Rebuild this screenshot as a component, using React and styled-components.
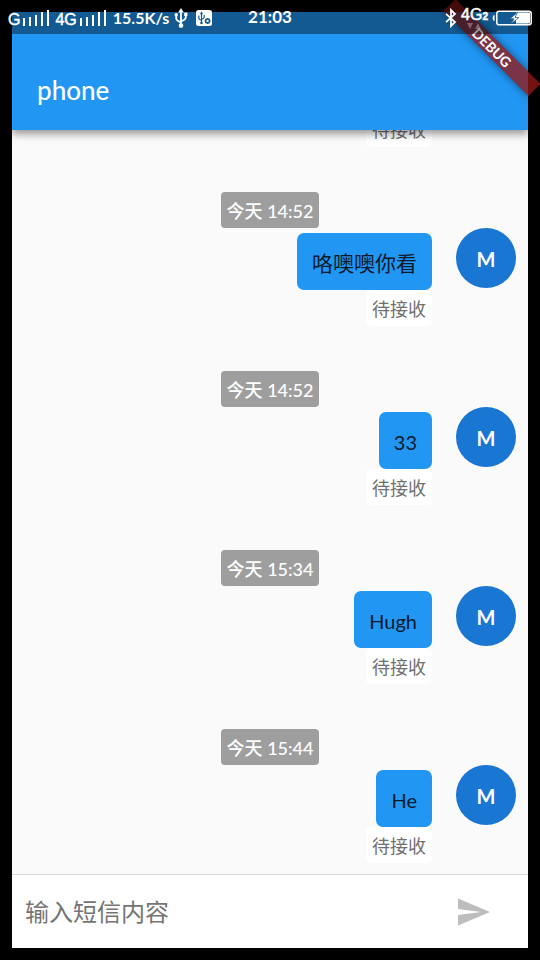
import React from "react";
import styled, { createGlobalStyle } from "styled-components";

const GlobalStyle = createGlobalStyle`
  *, *::before, *::after { box-sizing: border-box; }
  body {
    margin: 0;
    background: #000;
    font-family: Lato, "Noto Sans CJK SC", sans-serif;
  }
`;

const Device = styled.div`
  position: relative;
  display: flex;
  flex-direction: column;
  height: 100vh;
  padding: 12px;
  background: #000;
  overflow: hidden;
`;

const AppPanel = styled.main`
  flex: 1;
  min-height: 0;
  display: flex;
  flex-direction: column;
  background: #fafafa;
  overflow: hidden;
`;

const AppHeader = styled.header`
  position: relative;
  z-index: 1;
  flex: none;
  padding: 62px 25px 24px;
  background: #2196f3;
  box-shadow: 0 4px 8px rgba(0, 0, 0, 0.4);
`;

const Title = styled.h1`
  margin: 0;
  color: #fff;
  font-size: 26px;
  line-height: 32px;
  font-weight: 500;
`;

const StatusBar = styled.div`
  position: absolute;
  inset: 0 0 auto;
  z-index: 3;
  display: grid;
  grid-template-columns: 1fr auto 1fr;
  height: 34px;
  padding: 6px 8px;
  background: rgba(0, 0, 0, 0.4);
  color: #fff;
`;

const StatusGroup = styled.div`
  display: flex;
  align-items: center;
  justify-content: ${(p) => p.$align || "flex-start"};
  gap: ${(p) => p.$gap || 2}px;
`;

const Spacer = styled.span`
  width: ${(p) => p.$w}px;
`;

const StatusText = styled.span`
  font-size: ${(p) => p.$size || 16}px;
  line-height: 22px;
  font-weight: ${(p) => p.$weight || 400};
  white-space: nowrap;
`;

const Network = styled(StatusText)`
  font-family: "Liberation Sans", sans-serif;
  padding-top: ${(p) => (p.$raised ? 0 : 4)}px;
  padding-bottom: ${(p) => (p.$raised ? 4 : 0)}px;
  line-height: 18px;
  -webkit-text-stroke: 0.5px #fff;
  small { font-size: 10px; font-weight: 700; }
`;

const Icon = styled.svg`
  display: block;
  flex: none;
`;

const Ribbon = styled.div`
  position: absolute;
  top: 39px;
  right: -12px;
  z-index: 2;
  width: 120px;
  height: 17px;
  transform: rotate(45deg);
  background: linear-gradient(rgba(183, 28, 28, 0.63), rgba(183, 28, 28, 0.63)), rgba(0, 0, 0, 0.4);
  box-shadow: 0 0 8px rgba(0, 0, 0, 0.5);
  color: #fff;
  text-align: center;
  font-size: 14px;
  line-height: 17px;
  font-weight: 700;
`;

const MessageList = styled.ul`
  flex: 1;
  min-height: 0;
  margin: 0;
  padding: 0 12px 11px;
  list-style: none;
  display: flex;
  flex-direction: column;
  justify-content: flex-end;
  gap: 45px;
  overflow: hidden;
`;

const Message = styled.li`
  flex: none;
  display: flex;
  flex-direction: column;
`;

const TimeBadge = styled.time`
  align-self: center;
  height: 36px;
  padding: 2px 6px 0;
  border-radius: 4px;
  background: #9e9e9e;
  color: #fff;
  font-size: 18px;
  line-height: 34px;
  font-weight: 500;
  white-space: nowrap;
`;

const MessageRow = styled.div`
  display: flex;
  justify-content: flex-end;
  align-items: flex-start;
  gap: 24px;
`;

const Stack = styled.div`
  display: flex;
  flex-direction: column;
  align-items: flex-end;
  padding-top: ${(p) => (p.$flush ? 0 : 5)}px;
`;

const Bubble = styled.p`
  margin: 0;
  padding: 16px 15px 13px;
  border-radius: 7px;
  background: #2196f3;
  color: #0a1a2c;
  font-size: 20px;
  line-height: 28px;
  &:lang(zh) { font-size: 21px; }
`;

const Delivery = styled.span`
  height: 36px;
  padding: 2px 6px 0;
  border-radius: 5px;
  background: #fff;
  color: #707070;
  font-size: 18px;
  line-height: 34px;
`;

const Avatar = styled.div`
  flex: none;
  width: 60px;
  height: 60px;
  padding-top: 1px;
  border-radius: 50%;
  background: #1976d2;
  color: #fff;
  font-size: 20px;
  line-height: 60px;
  font-weight: 700;
  text-align: center;
`;

const AvatarSpace = styled.div`
  flex: none;
  width: 60px;
`;

const Composer = styled.form`
  flex: none;
  display: flex;
  align-items: center;
  height: 74px;
  padding: 0 12px 0 13px;
  border-top: 1px solid #d8d8d8;
  background: #fff;
`;

const MessageInput = styled.input`
  flex: 1;
  min-width: 0;
  height: 48px;
  padding: 0;
  border: 0;
  outline: 0;
  background: transparent;
  color: #212121;
  font: 24px/36px Lato, "Noto Sans CJK SC", sans-serif;
  &::placeholder { color: #757575; opacity: 1; }
`;

const SendButton = styled.button`
  flex: none;
  display: grid;
  place-items: center;
  width: 84px;
  height: 60px;
  padding: 0;
  border: 0;
  background: transparent;
  color: #bdbdbd;
`;

function Signal() {
  return (
    <Icon width="28" height="18" viewBox="0 0 28 18" fill="#fff" aria-hidden="true">
      <rect x="1" y="9" width="2" height="8" />
      <rect x="7" y="8" width="2" height="9" />
      <rect x="13" y="6" width="2" height="11" />
      <rect x="19" y="3" width="2" height="14" />
      <rect x="25" y="1" width="2" height="16" />
    </Icon>
  );
}

function Usb() {
  return (
    <Icon width="14" height="20" viewBox="0 0 14 20" fill="none" stroke="#fff" strokeWidth="1.8" aria-hidden="true">
      <path d="M7 3v14M2.2 7v3.2c0 1.8 1 2.8 4.8 4M11.8 6v3.2c0 1.8-1 2.8-4.8 4" />
      <path d="M7 0l2.8 4.5H4.2z" fill="#fff" stroke="none" />
      <circle cx="7" cy="17.6" r="2.3" fill="#fff" stroke="none" />
      <circle cx="2.2" cy="6.8" r="1.7" fill="#fff" stroke="none" />
      <rect x="10.2" y="4.6" width="3.2" height="3.4" fill="#fff" stroke="none" />
    </Icon>
  );
}

function UsbDebug() {
  return (
    <Icon width="16" height="16" viewBox="0 0 16 16" fill="none" stroke="#145a92" strokeWidth="1.2" aria-hidden="true">
      <rect width="16" height="16" rx="2.5" fill="#fff" stroke="none" />
      <path d="M5.5 2.5v11M2.8 5.5v2.8c0 1.2 1 1.6 2.7 2.2M8.2 5v2.3c0 1.2-1 1.6-2.7 2.2" />
      <path d="M5.5 1.6l1.6 2.6H3.9z" fill="#145a92" stroke="none" />
      <circle cx="5.5" cy="13" r="1.3" fill="#145a92" stroke="none" />
      <circle cx="11.6" cy="11" r="1.9" strokeWidth="1.5" />
      <path d="M11.6 8v1M11.6 13v1M8.6 11h1M13.6 11h1M9.6 9l.6.6M13 12.4l.6.6M13.6 9l-.6.6M10.2 12.4l-.6.6" />
    </Icon>
  );
}

function Bluetooth() {
  return (
    <Icon width="12" height="20" viewBox="0 0 12 20" fill="none" stroke="#fff" strokeWidth="1.8" aria-hidden="true">
      <path d="M1 5.8l9 8.2-4 4V2l4 4-9 8.2" />
    </Icon>
  );
}

function Traffic() {
  return (
    <Icon width="14" height="6" viewBox="0 0 14 6" fill="#fff" fillOpacity="0.3" aria-hidden="true">
      <path d="M0 0h6L3 6zM8 6h6l-3-6z" />
    </Icon>
  );
}

function Battery() {
  return (
    <Icon width="40" height="16" viewBox="0 0 40 16" aria-hidden="true">
      <path d="M2 5.5Q0 8 2 10.5z" fill="#fff" stroke="#fff" />
      <rect x="4.8" y="1.2" width="34.4" height="13.6" rx="2.4" fill="none" stroke="#fff" strokeWidth="1.5" />
      <path d="M24 2.5h14v11H24z" fill="#fff" />
      <path d="M25.5 2.5L18 8.8h4l-3 5 8-6.3h-4z" fill="#fff" stroke="#145a92" strokeWidth="0.7" />
    </Icon>
  );
}

const CellLabel = styled.div`
  position: relative;
  display: flex;
`;

const TrafficMark = styled.span`
  position: absolute;
  left: 6px;
  bottom: 1px;
`;

const messages = [
  { id: 1, partial: true },
  { id: 2, time: "14:52", text: "咯噢噢你看", lang: "zh" },
  { id: 3, time: "14:52", text: "33", lang: "en" },
  { id: 4, time: "15:34", text: "Hugh", lang: "en" },
  { id: 5, time: "15:44", text: "He", lang: "en" },
];

function MessageItem({ message }) {
  if (message.partial) {
    return (
      <Message>
        <MessageRow>
          <Stack $flush>
            <Delivery>待接收</Delivery>
          </Stack>
          <AvatarSpace />
        </MessageRow>
      </Message>
    );
  }
  return (
    <Message>
      <TimeBadge dateTime={message.time}>今天 {message.time}</TimeBadge>
      <MessageRow>
        <Stack>
          <Bubble lang={message.lang}>{message.text}</Bubble>
          <Delivery>待接收</Delivery>
        </Stack>
        <Avatar>M</Avatar>
      </MessageRow>
    </Message>
  );
}

export default function App() {
  return (
    <Device>
      <GlobalStyle />
      <StatusBar>
        <StatusGroup>
          <Network>G</Network>
          <Signal />
          <Spacer $w={1} />
          <Network>4G</Network>
          <Signal />
          <Spacer $w={2} />
          <StatusText $weight={700}>15.5K/s</StatusText>
          <Spacer $w={1} />
          <Usb />
          <Spacer $w={4} />
          <UsbDebug />
        </StatusGroup>
        <StatusText $size={17} $weight={700}>21:03</StatusText>
        <StatusGroup $align="flex-end" $gap={4}>
          <Bluetooth />
          <CellLabel>
            <Network $raised>4G<small>2</small></Network>
            <TrafficMark><Traffic /></TrafficMark>
          </CellLabel>
          <Battery />
        </StatusGroup>
      </StatusBar>
      <Ribbon>DEBUG</Ribbon>
      <AppPanel>
        <AppHeader>
          <Title>phone</Title>
        </AppHeader>
        <MessageList>
          {messages.map((m) => (
            <MessageItem key={m.id} message={m} />
          ))}
        </MessageList>
        <Composer onSubmit={(e) => e.preventDefault()}>
          <MessageInput type="text" aria-label="输入短信内容" placeholder="输入短信内容" />
          <SendButton type="submit" aria-label="发送">
            <Icon width="32" height="28" viewBox="0 0 32 28" fill="currentColor" aria-hidden="true">
              <path d="M0 0.5L32 14L0 27.5V17L23 14L0 11z" />
            </Icon>
          </SendButton>
        </Composer>
      </AppPanel>
    </Device>
  );
}
